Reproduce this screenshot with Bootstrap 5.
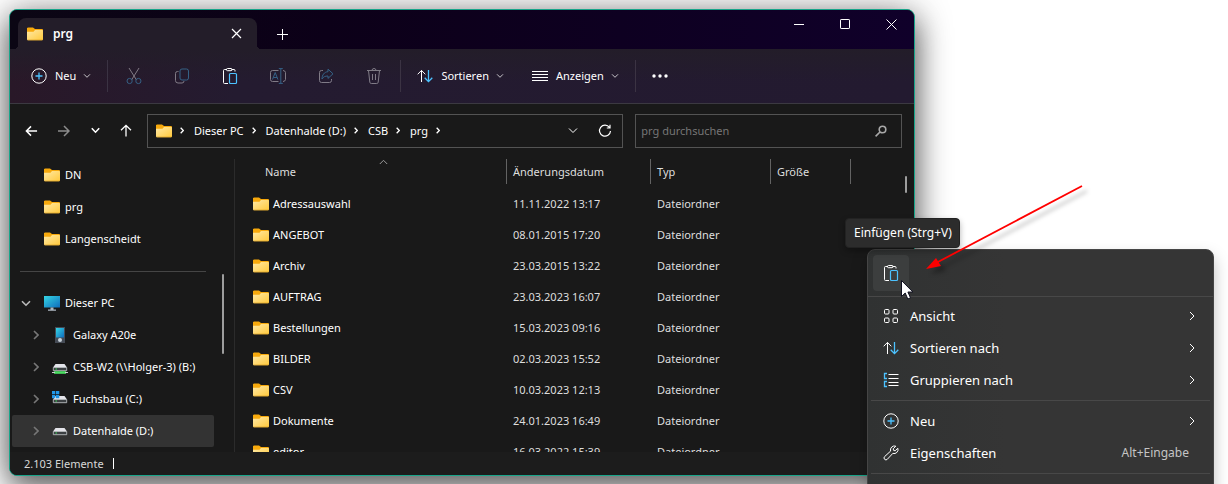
<!DOCTYPE html>
<html lang="de" data-bs-theme="dark">
<head>
<meta charset="utf-8">
<meta name="viewport" content="width=device-width, initial-scale=1">
<title>prg</title>
<link href="https://cdn.jsdelivr.net/npm/bootstrap@5.3.0/dist/css/bootstrap.min.css" rel="stylesheet">
<style>
  :root { --edge: #18a58a; --pane: #191919; }
  body { font-family: "Noto Sans", "Open Sans", sans-serif; font-size: 11px; line-height: 16px; color: #fff; background: #fff; }
  button { background: none; border: 0; padding: 0; color: inherit; }
  a { color: inherit; text-decoration: none; }
  svg { display: block; flex: none; fill: none; }
  svg:not([stroke]) { stroke: currentColor; }
  .stage { min-height: 100vh; padding: 9px 313px 8px 9px; }
  .explorer { height: calc(100vh - 17px); border: 1px solid var(--edge); border-radius: 8px; background: var(--pane); box-shadow: 0 4px 36px rgba(0,0,0,.45), 0 14px 28px rgba(0,0,0,.4); }
  .titlebar { height: 39px; padding-left: 8px; background: linear-gradient(90deg, #0b0614, #0c0018 35%, #10002a); }
  .tab-top { position: relative; width: 239px; height: 31px; padding: 0 15px 0 9px; gap: 10px; border-radius: 8px 8px 0 0; background: #231d29; font-size: 12px; font-weight: 600; }
  .tab-top::before, .tab-top::after { content: ""; position: absolute; bottom: 0; width: 4px; height: 4px; }
  .tab-top::before { left: -4px; background: radial-gradient(circle at 0 0, transparent 4px, #231d29 4px); }
  .tab-top::after { right: -4px; background: radial-gradient(circle at 100% 0, transparent 4px, #231d29 4px); }
  .newtab { margin: 0 0 8px 19px; }
  .winctl { width: 46px; height: 28px; }
  .toolbar { height: 55px; border-bottom: 1px solid #3b3941; background: linear-gradient(180deg, #231d29, transparent 60%), linear-gradient(90deg, #291828, #241b30 25%, #231a30); font-weight: 500; }
  .tool { width: 48px; height: 32px; }
  .cmd { padding: 0 14px; }
  .cmd.first { padding-left: 21px; }
  .cmd svg:first-child { margin-right: 8px; }
  .cmd svg.chev { margin-left: 7px; opacity: .75; }
  .dim { opacity: .42; }
  .rule-v { width: 1px; height: 32px; margin: 0 2px; background: #3b3343; }
  .navrow { height: 55px; padding: 0 12px 2px 15px; }
  .moves { width: 107px; margin-right: 15px; }
  .box { height: 34px; border: 1px solid #535353; }
  .address { flex: 457 1 0; padding: 0 10px 0 8px; margin-right: 12px; }
  .address .step { margin: 0 10px 0 8px; }
  .searchbox { flex: 246 1 0; padding: 0 14px 0 5px; }
  .searchbox input { min-width: 0; background: none; border: 0; outline: 0; color: #fff; padding: 0; }
  .searchbox input::placeholder { color: #767676; opacity: 1; }
  .tree { width: 225px; border-right: 1px solid #2b2b2b; padding: 0 20px 0 2px; position: relative; }
  .node { height: 32px; border-radius: 2px; white-space: nowrap; width: 100%; gap: 5px; }
  .node.top { padding-left: 32px; }
  .node.root { padding-left: 9px; }
  .node.sub { padding-left: 21px; }
  .node.picked { background: #333; }
  .tree hr { margin: 16px 8px 15px; border-color: #454545; opacity: 1; }
  .thumb { position: absolute; width: 2px; background: #9d9d9d; border-radius: 1px; }
  .tree .thumb { right: 10px; top: 115px; height: 80px; }
  .files .thumb { right: 7px; top: 17px; height: 17px; }
  .files { position: relative; }
  .files table { table-layout: fixed; width: 100%; border-collapse: separate; border-spacing: 0; }
  .files th { position: relative; font-weight: 400; color: #dedede; height: 29px; padding: 0 0 4px 6px; }
  .files th::after { content: ""; position: absolute; right: 0; top: 0; height: 25px; width: 1px; background: #636363; }
  .files th:first-child { padding-left: 30px; }
  .files th:last-child::after { display: none; }
  .files td { height: 31px; padding: 0 0 0 6px; color: #dedede; white-space: nowrap; }
  .files td:first-child { padding-left: 18px; color: #fff; }
  .sortmark { position: absolute; left: 53%; top: 0; }
  .status { height: 23px; padding-left: 14px; gap: 9px; background: #1c1c1c; color: #d8d8d8; }
  .caret { width: 1px; height: 11px; background: #fff; }
  .ctx { position: absolute; right: 14px; top: 249px; width: 347px; height: 260px; border: 1px solid #454545; border-radius: 8px; background: linear-gradient(90deg, #303232, #353535 40%); box-shadow: 0 8px 16px rgba(0,0,0,.25); font-size: 13px; }
  .ctx hr { margin: 4px 3px; border-color: #484848; opacity: 1; }
  .ctx hr.wide { margin: 5px 0 3px; }
  .paste { position: relative; width: 36px; height: 36px; margin: 5px 0 0 5px; border-radius: 4px; background: #3c3e3e; }
  .entry { width: 100%; height: 32px; padding: 0 18px 0 15px; gap: 11px; text-align: left; }
  .entry kbd { background: none; padding: 0 6px 0 0; font: inherit; font-size: 12px; color: #c5c5c5; }
  .pointer { position: absolute; left: 27px; top: 24px; }
  .tip { position: absolute; right: 268px; top: 218px; height: 30px; padding: 6px 8px; width: 115px; background: #2c2c2c; border: 1px solid #222; border-radius: 4px; box-shadow: 0 3px 6px rgba(0,0,0,.3); white-space: nowrap; font-size: 12px; }
  .callout { position: absolute; right: 140px; top: 180px; filter: drop-shadow(5px 5px 2px rgba(0,0,0,.3)); }
</style>
</head>
<body>
<svg width="0" height="0" class="position-absolute" aria-hidden="true">
  <defs>
    <linearGradient id="gf" x1="0" y1="0" x2="1" y2="1"><stop offset="0" stop-color="#ffe9a6"/><stop offset="1" stop-color="#ffc93c"/></linearGradient>
    <linearGradient id="gs" x1="0" y1="0" x2="1" y2="1"><stop offset="0" stop-color="#35d6e4"/><stop offset="1" stop-color="#0f6cbd"/></linearGradient>
    <symbol id="folder" viewBox="0 0 16 14"><path stroke="none" fill="#f7a90c" d="M0 2a1.300 1.300 0 0 1 1.300-1.500h4.700L8 2h7a1 1 0 0 1 1 1v4H0z"/><path stroke="none" fill="url(#gf)" d="M0 4.800h6.500L8 3h7.200a.8.8 0 0 1 .8.8v8.400a1 1 0 0 1-1 1H1a1 1 0 0 1-1-1z"/><path stroke="#d79a20" stroke-width=".6" d="M.6 13h14.800"/></symbol>
    <symbol id="clip" viewBox="0 0 16 18"><path d="M5 2.500H2.500a1 1 0 0 0-1 1v12a1 1 0 0 0 1 1H6M9.500 2.500H12a1 1 0 0 1 1 1V4.500"/><rect x="4.500" y="1.500" width="5.500" height="2.200" rx="1"/><rect x="7.500" y="6.500" width="7" height="10" rx="1" stroke="#4cc2ff" stroke-width="1.200"/></symbol>
    <symbol id="plusc" viewBox="0 0 16 16"><circle cx="8" cy="8" r="7.200"/><path stroke="#4cc2ff" stroke-width="1.300" d="M8 4.500v7M4.500 8h7"/></symbol>
    <symbol id="sort" viewBox="0 0 16 14"><path d="M4.500 13V1.500M.7 5.300l3.800-3.900 3.800 3.900"/><path stroke="#4cc2ff" stroke-width="1.300" d="M11.500 1v11.500M7.700 8.700l3.800 3.900 3.800-3.900"/></symbol>
    <symbol id="down" viewBox="0 0 8 6"><path d="M1 1.300l3 3 3-3"/></symbol>
    <symbol id="right" viewBox="0 0 6 10"><path d="M1 1l4 4-4 4"/></symbol>
    <symbol id="drive" viewBox="0 0 16 16"><path stroke="none" fill="#e4e4ea" d="M3.500 5h9L15 8.500H1z"/><path fill="#3c4043" stroke="#b9bcc0" stroke-width=".9" d="M1.300 8.500h13.400v3.200H1.300z"/><path stroke="#3de05a" stroke-width="1.200" d="M3.500 10h1.500"/></symbol>
  </defs>
</svg>

<main class="stage position-relative overflow-hidden">
  <section class="explorer d-flex flex-column overflow-hidden">
    <header class="titlebar d-flex align-items-end flex-shrink-0">
      <div class="tab-top d-flex align-items-center">
        <svg width="16" height="14"><use href="#folder"/></svg>
        <span class="me-auto">prg</span>
        <button aria-label="Tab schließen"><svg width="11" height="11" viewBox="0 0 11 11" stroke-width="1.200" stroke="#fff"><path d="M1 1l9 9M10 1L1 10"/></svg></button>
      </div>
      <button class="newtab" aria-label="Neuer Tab"><svg width="13" height="13" viewBox="0 0 13 13"><path d="M6.500 1v11M1 6.500h11"/></svg></button>
      <div class="ms-auto align-self-start d-flex">
        <button class="winctl d-flex align-items-center justify-content-center" aria-label="Minimieren"><svg width="10" height="11" viewBox="0 0 10 11"><path d="M0 5.500h10"/></svg></button>
        <button class="winctl d-flex align-items-center justify-content-center" aria-label="Maximieren"><svg width="10" height="10" viewBox="0 0 10 10"><rect x=".5" y=".5" width="9" height="9" rx=".6"/></svg></button>
        <button class="winctl d-flex align-items-center justify-content-center" aria-label="Schließen"><svg width="11" height="11" viewBox="0 0 11 11"><path d="M.5.5l10 10M10.500.5l-10 10"/></svg></button>
      </div>
    </header>

    <div class="toolbar d-flex align-items-center flex-shrink-0" role="toolbar">
      <button class="cmd first d-flex align-items-center"><svg width="16" height="16"><use href="#plusc"/></svg>Neu<svg width="8" height="6" class="chev"><use href="#down"/></svg></button>
      <div class="rule-v"></div>
      <button class="tool dim d-flex align-items-center justify-content-center" aria-label="Ausschneiden"><svg width="16" height="18" viewBox="0 0 16 18"><path d="M3 1l7.500 12M13 1L5.500 13"/><circle cx="3.600" cy="14" r="2.600" stroke="#4cc2ff"/><circle cx="12.400" cy="14" r="2.600" stroke="#4cc2ff"/></svg></button>
      <button class="tool dim d-flex align-items-center justify-content-center" aria-label="Kopieren"><svg width="16" height="16" viewBox="0 0 16 16"><path d="M4.500 3.500H3.500a2 2 0 0 0-2 2v7a2.500 2.500 0 0 0 2.500 2.500h4a2 2 0 0 0 2-2"/><rect x="6" y="1" width="8.500" height="11" rx="2" stroke="#4cc2ff"/></svg></button>
      <button class="tool d-flex align-items-center justify-content-center" aria-label="Einfügen"><svg width="16" height="18"><use href="#clip"/></svg></button>
      <button class="tool dim d-flex align-items-center justify-content-center" aria-label="Umbenennen"><svg width="18" height="16" viewBox="0 0 18 16"><path d="M9.500 2.500h-6a2 2 0 0 0-2 2v7a2 2 0 0 0 2 2h6M14 2.500a2.500 2.500 0 0 1 2.500 2v7a2.500 2.500 0 0 1-2.500 2"/><path stroke="#4cc2ff" d="M11.800 1v14M9.800.6h4M9.800 15.400h4M3.500 11.500L6.200 4.500l2.700 7M4.500 9.500h3.500"/></svg></button>
      <button class="tool dim d-flex align-items-center justify-content-center" aria-label="Freigeben"><svg width="16" height="16" viewBox="0 0 16 16"><path d="M5 2.500H3.500a2 2 0 0 0-2 2v8a2 2 0 0 0 2 2h8a2 2 0 0 0 2-2V11"/><path stroke="#4cc2ff" stroke-linejoin="round" d="M10 1.200l5 4.600-5 4.600V8C7 8 5.300 8.800 4 11c0-4 2.200-7 6-7.300z"/></svg></button>
      <button class="tool dim d-flex align-items-center justify-content-center" aria-label="Löschen"><svg width="16" height="18" viewBox="0 0 16 18"><path d="M1 3.500h14M6 3.500a2 2 0 0 1 4 0M2.500 3.500l1.300 11.700a1.500 1.500 0 0 0 1.500 1.300h5.400a1.500 1.500 0 0 0 1.500-1.300L13.500 3.500M6.500 7v6M9.500 7v6"/></svg></button>
      <div class="rule-v"></div>
      <button class="cmd d-flex align-items-center"><svg width="16" height="14"><use href="#sort"/></svg>Sortieren<svg width="8" height="6" class="chev"><use href="#down"/></svg></button>
      <button class="cmd d-flex align-items-center"><svg width="16" height="11" viewBox="0 0 16 11"><path d="M0 .5h16M0 3.500h16M0 6.500h16M0 9.500h16"/></svg>Anzeigen<svg width="8" height="6" class="chev"><use href="#down"/></svg></button>
      <div class="rule-v"></div>
      <button class="cmd" aria-label="Mehr anzeigen"><svg width="16" height="4" viewBox="0 0 16 4"><g fill="#fff" stroke="none"><circle cx="2" cy="2" r="1.700"/><circle cx="8" cy="2" r="1.700"/><circle cx="14" cy="2" r="1.700"/></g></svg></button>
    </div>

    <div class="navrow d-flex align-items-center flex-shrink-0">
      <div class="moves d-flex align-items-center justify-content-between">
        <button aria-label="Zurück"><svg width="13" height="12" viewBox="0 0 14 12" stroke-width="1.600"><path d="M13 6H1.500M6.500 1l-5 5 5 5"/></svg></button>
        <button class="opacity-50" aria-label="Vorwärts"><svg width="12" height="12" viewBox="0 0 12 12" stroke-width="1.500"><path d="M0 6h11M6 1l5 5-5 5"/></svg></button>
        <button aria-label="Zuletzt besucht"><svg width="9" height="7" viewBox="0 0 8 6" stroke-width="1.400"><path d="M.7 1l3.300 3.500L7.300 1"/></svg></button>
        <button aria-label="Aufwärts"><svg width="12" height="13" viewBox="0 0 12 13" stroke-width="1.300"><path d="M6 12.500V1.500M1 6.300l5-5 5 5"/></svg></button>
      </div>
      <nav class="box address d-flex align-items-center" aria-label="Pfad">
        <svg width="16" height="14"><use href="#folder"/></svg>
        <svg class="step" width="4" height="7" stroke-width="2"><use href="#right"/></svg>
        <a href="#">Dieser PC</a>
        <svg class="step" width="4" height="7" stroke-width="2"><use href="#right"/></svg>
        <a href="#">Datenhalde (D:)</a>
        <svg class="step" width="4" height="7" stroke-width="2"><use href="#right"/></svg>
        <a href="#">CSB</a>
        <svg class="step" width="4" height="7" stroke-width="2"><use href="#right"/></svg>
        <a href="#">prg</a>
        <svg class="step" width="4" height="7" stroke-width="2"><use href="#right"/></svg>
        <button class="ms-auto me-3" aria-label="Vorherige Orte"><svg width="10" height="7" viewBox="0 0 10 7"><path d="M1 1.500l4 4 4-4"/></svg></button>
        <button class="ms-1" aria-label="Aktualisieren"><svg width="14" height="14" viewBox="0 0 14 14" stroke-width="1.200"><path d="M11.500 3.500A5.500 5.500 0 1 0 12.500 7M12 .8v3.200H8.800"/></svg></button>
      </nav>
      <label class="box searchbox d-flex align-items-center">
        <input type="text" class="flex-grow-1" placeholder="prg durchsuchen" aria-label="prg durchsuchen">
        <svg width="12" height="12" viewBox="0 0 12 12" stroke="#a8a8a8" stroke-width="1.600"><circle cx="7.500" cy="4.500" r="3.300"/><path d="M5.200 6.800L.6 11.400"/></svg>
      </label>
    </div>

    <div class="d-flex flex-grow-1 overflow-hidden">
      <aside class="tree flex-shrink-0 overflow-hidden">
        <button class="node top d-flex align-items-center"><svg width="16" height="14"><use href="#folder"/></svg>DN</button>
        <button class="node top d-flex align-items-center"><svg width="16" height="14"><use href="#folder"/></svg>prg</button>
        <button class="node top d-flex align-items-center"><svg width="16" height="14"><use href="#folder"/></svg>Langenscheidt</button>
        <hr>
        <button class="node root d-flex align-items-center"><svg width="10" height="7" viewBox="0 0 10 7" stroke="#bbb" stroke-width="1.600" class="me-2"><path d="M1 1.200l4 4 4-4"/></svg><svg width="16" height="16" viewBox="0 0 16 16"><path stroke="none" fill="url(#gs)" d="M0 1h16v11.500H0z"/><path stroke="none" fill="#aeb8c2" d="M6.500 12.500h3v2H12v1.200H4v-1.200h2.500z"/></svg>Dieser PC</button>
        <button class="node sub d-flex align-items-center"><svg width="6" height="10" stroke-width="1.600" stroke="#777" class="me-2"><use href="#right"/></svg><svg width="16" height="16" viewBox="0 0 16 16"><path stroke="none" fill="#454b55" d="M3 0h10v16H3z"/><path stroke="none" fill="url(#gs)" d="M4 1h8v9.500H4z"/><circle cx="8" cy="13" r="2" fill="#c9d2da" stroke="none"/></svg>Galaxy A20e</button>
        <button class="node sub d-flex align-items-center"><svg width="6" height="10" stroke-width="1.600" stroke="#777" class="me-2"><use href="#right"/></svg><svg width="16" height="16" viewBox="0 0 16 16"><use href="#drive"/><path stroke="none" fill="#4ade62" d="M2 12.200h12v2.600H2z"/><path stroke="#c9ccd0" d="M0 13.500h3M13 13.500h3"/></svg>CSB-W2 (\\Holger-3) (B:)</button>
        <button class="node sub d-flex align-items-center"><svg width="6" height="10" stroke-width="1.600" stroke="#777" class="me-2"><use href="#right"/></svg><svg width="16" height="16" viewBox="0 0 16 16"><use href="#drive"/><path fill="#2196e8" stroke="none" d="M0 0h3.300v3.300H0zM4 0h3.300v3.300H4zM0 4h3.300v3.300H0zM4 4h3.300v3.300H4z"/></svg>Fuchsbau (C:)</button>
        <button class="node sub picked d-flex align-items-center"><svg width="6" height="10" stroke-width="1.600" stroke="#777" class="me-2"><use href="#right"/></svg><svg width="16" height="16"><use href="#drive"/></svg>Datenhalde (D:)</button>
        <div class="thumb"></div>
      </aside>
      <div class="files flex-grow-1 overflow-hidden">
        <table>
          <colgroup><col style="width:272px"><col style="width:144px"><col style="width:120px"><col style="width:80px"><col></colgroup>
          <thead><tr><th>Name<svg class="sortmark" width="9" height="6" viewBox="0 0 9 6" stroke="#9a9a9a"><path d="M.8 5l3.700-3.700L8.200 5"/></svg></th><th>Änderungsdatum</th><th>Typ</th><th>Größe</th><th></th></tr></thead>
          <tbody>
            <tr><td><span class="d-flex align-items-center gap-1"><svg width="16" height="14"><use href="#folder"/></svg>Adressauswahl</span></td><td>11.11.2022 13:17</td><td>Dateiordner</td><td></td><td></td></tr>
            <tr><td><span class="d-flex align-items-center gap-1"><svg width="16" height="14"><use href="#folder"/></svg>ANGEBOT</span></td><td>08.01.2015 17:20</td><td>Dateiordner</td><td></td><td></td></tr>
            <tr><td><span class="d-flex align-items-center gap-1"><svg width="16" height="14"><use href="#folder"/></svg>Archiv</span></td><td>23.03.2015 13:22</td><td>Dateiordner</td><td></td><td></td></tr>
            <tr><td><span class="d-flex align-items-center gap-1"><svg width="16" height="14"><use href="#folder"/></svg>AUFTRAG</span></td><td>23.03.2023 16:07</td><td>Dateiordner</td><td></td><td></td></tr>
            <tr><td><span class="d-flex align-items-center gap-1"><svg width="16" height="14"><use href="#folder"/></svg>Bestellungen</span></td><td>15.03.2023 09:16</td><td>Dateiordner</td><td></td><td></td></tr>
            <tr><td><span class="d-flex align-items-center gap-1"><svg width="16" height="14"><use href="#folder"/></svg>BILDER</span></td><td>02.03.2023 15:52</td><td>Dateiordner</td><td></td><td></td></tr>
            <tr><td><span class="d-flex align-items-center gap-1"><svg width="16" height="14"><use href="#folder"/></svg>CSV</span></td><td>10.03.2023 12:13</td><td>Dateiordner</td><td></td><td></td></tr>
            <tr><td><span class="d-flex align-items-center gap-1"><svg width="16" height="14"><use href="#folder"/></svg>Dokumente</span></td><td>24.01.2023 16:49</td><td>Dateiordner</td><td></td><td></td></tr>
            <tr><td><span class="d-flex align-items-center gap-1"><svg width="16" height="14"><use href="#folder"/></svg>editor</span></td><td>16.03.2022 15:39</td><td>Dateiordner</td><td></td><td></td></tr>
          </tbody>
        </table>
        <div class="thumb"></div>
      </div>
    </div>

    <footer class="status d-flex align-items-center flex-shrink-0"><span>2.103 Elemente</span><span class="caret"></span></footer>
  </section>

  <div class="ctx" role="menu">
    <button class="paste d-flex align-items-center justify-content-center" aria-label="Einfügen">
      <svg width="16" height="18"><use href="#clip"/></svg>
      <svg class="pointer" width="14" height="22" viewBox="0 0 14 22"><path fill="#fff" stroke="#101020" d="M1.500 1.500v16l3.700-3.500 2.600 6 2.700-1.200-2.600-5.800h5z"/></svg>
    </button>
    <hr class="wide">
    <button class="entry d-flex align-items-center" role="menuitem"><svg width="16" height="16" viewBox="0 0 16 16"><g><rect x="1.500" y="1.500" width="4.500" height="4.500" rx="1"/><rect x="10" y="1.500" width="4.500" height="4.500" rx="1"/><rect x="1.500" y="10" width="4.500" height="4.500" rx="1"/><rect x="10" y="10" width="4.500" height="4.500" rx="1"/></g></svg><span class="me-auto">Ansicht</span><svg width="6" height="10"><use href="#right"/></svg></button>
    <button class="entry d-flex align-items-center" role="menuitem"><svg width="16" height="14"><use href="#sort"/></svg><span class="me-auto">Sortieren nach</span><svg width="6" height="10"><use href="#right"/></svg></button>
    <button class="entry d-flex align-items-center" role="menuitem"><svg width="16" height="16" viewBox="0 0 16 16"><path d="M5.500 2.500h10M5.500 6.500h10M5.500 10.500h10M5.500 13.500h10"/><path stroke="#4cc2ff" stroke-width="1.300" d="M4 1.500H1.500v5H4M4 9.500H1.500v5H4"/></svg><span class="me-auto">Gruppieren nach</span><svg width="6" height="10"><use href="#right"/></svg></button>
    <hr>
    <button class="entry d-flex align-items-center" role="menuitem"><svg width="16" height="16"><use href="#plusc"/></svg><span class="me-auto">Neu</span><svg width="6" height="10"><use href="#right"/></svg></button>
    <button class="entry d-flex align-items-center" role="menuitem"><svg width="16" height="16" viewBox="0 0 16 16"><path stroke-linejoin="round" d="M12.800 1.200L10.200 3.800l.4 1.600 1.600.4 2.600-2.600a4 4 0 0 1-5 5.200L4.300 14.300a1.900 1.900 0 0 1-2.700-2.700l6-5.500a4 4 0 0 1 5.200-4.900z"/></svg><span class="me-auto">Eigenschaften</span><kbd>Alt+Eingabe</kbd></button>
    <hr>
  </div>
  <div class="tip" role="tooltip">Einfügen (Strg+V)</div>
  <svg class="callout" width="170" height="100" viewBox="0 0 170 100" aria-hidden="true"><path stroke="red" stroke-width="1.800" d="M164 6L18 83"/><path fill="red" stroke="none" d="M8 89l10-11 5 8z"/></svg>
</main>
<script src="https://cdn.jsdelivr.net/npm/bootstrap@5.3.0/dist/js/bootstrap.bundle.min.js"></script>
</body>
</html>
